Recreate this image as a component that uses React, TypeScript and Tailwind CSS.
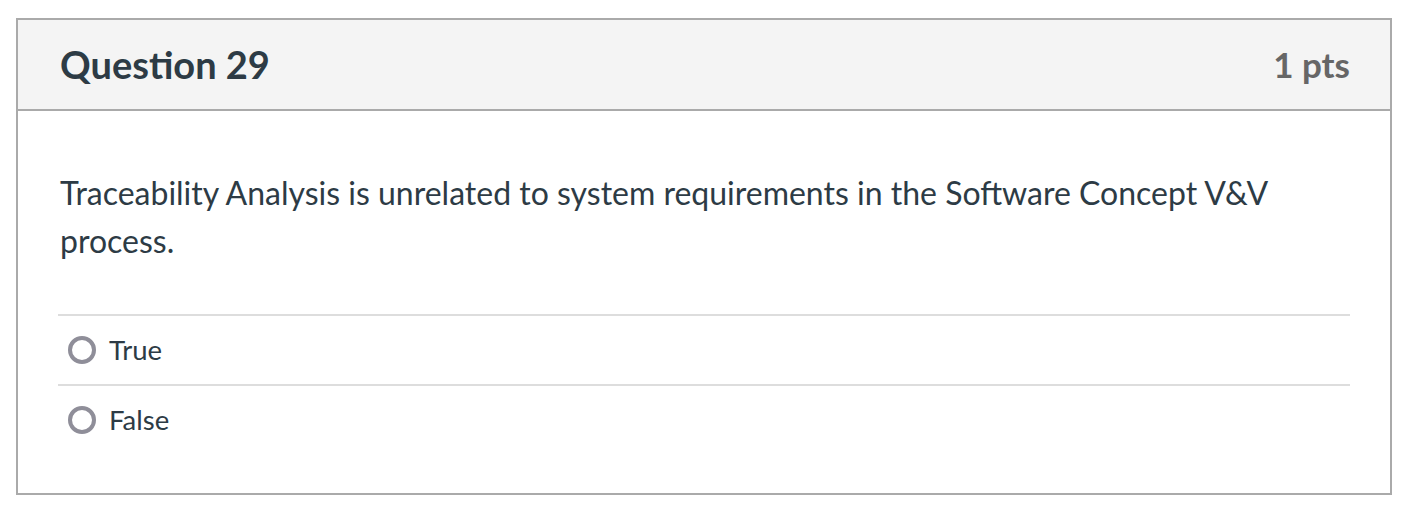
import React from "react";

const font = { fontFamily: "Lato, 'Noto Sans', sans-serif" };

function Radio() {
  return (
    <span className="inline-block w-[28px] h-[28px] rounded-full border-[4px] border-[#8f8e99] bg-white shrink-0" />
  );
}

export default function App() {
  return (
    <div className="w-[1410px] h-[524px] bg-white pt-[18px] pl-[16px]" style={font}>
      <div className="w-[1376px] h-[477px] border-2 border-[#aaaaaa] flex flex-col">
        <div className="h-[91px] bg-[#f4f4f4] border-b-2 border-[#aaaaaa] flex items-center justify-between pl-[42px] pr-[40px]">
          <span className="text-[38px] font-bold text-[#2d3b45]">Question 29</span>
          <span className="text-[35px] font-bold text-[#666666]">1 pts</span>
        </div>
        <div className="px-[40px] pt-[58px]">
          <p className="text-[32px] leading-[48px] text-[#2d3b45] pl-[2px]">
            Traceability Analysis is unrelated to system requirements in the Software Concept V&amp;V process.
          </p>
          <div className="mt-[49px]">
            {["True", "False"].map((o) => (
              <div key={o} className="border-t-2 border-[#dddddd] h-[70px] flex items-center pl-[10px] gap-[13px]">
                <Radio />
                <span className="text-[27.5px] text-[#2d3b45]">{o}</span>
              </div>
            ))}
          </div>
        </div>
      </div>
    </div>
  );
}
